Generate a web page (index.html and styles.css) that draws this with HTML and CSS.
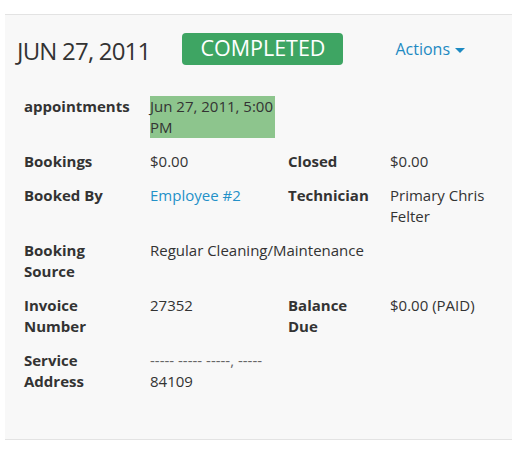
FILE: index.html
```html
<!DOCTYPE html>
<html>
<head>
    <title>Appointment</title>
    <link rel="stylesheet" href="styles.css">
</head>
<body>
    <div class="panel">
        <div class="panel-header">
            <h2 class="appt-date">JUN 27, 2011</h2>
            <span class="status-badge">COMPLETED</span>
            <a class="actions" href="#">Actions <span class="caret"></span></a>
        </div>
        <div class="details">
            <div class="label">appointments</div>
            <div class="value highlight">Jun 27, 2011, 5:00 PM</div>
            <div></div>
            <div></div>

            <div class="label">Bookings</div>
            <div class="value">$0.00</div>
            <div class="label">Closed</div>
            <div class="value">$0.00</div>

            <div class="label">Booked By</div>
            <div class="value"><a href="#">Employee #2</a></div>
            <div class="label">Technician</div>
            <div class="value">Primary Chris Felter</div>

            <div class="label">Booking Source</div>
            <div class="value wide">Regular Cleaning/Maintenance</div>

            <div class="label">Invoice Number</div>
            <div class="value">27352</div>
            <div class="label">Balance Due</div>
            <div class="value">$0.00 (PAID)</div>

            <div class="label">Service Address</div>
            <div class="value"><span class="muted">----- ----- -----, -----</span> 84109</div>
        </div>
    </div>
</body>
</html>
```

FILE: styles.css
```css
* { box-sizing: border-box; margin: 0; padding: 0; }
body {
    font-family: 'Open Sans', Arial, sans-serif;
    background: #fff;
    color: #333;
}
.panel {
    width: 507px;
    margin: 14px 0 0 5px;
    background: #f8f8f8;
    border-top: 1px solid #e3e3e3;
    border-bottom: 1px solid #e3e3e3;
    padding: 18px 19px 47px 19px;
}
.panel-header {
    display: flex;
    align-items: flex-start;
    margin-left: -7px;
}
.appt-date {
    font-size: 24px;
    font-weight: 400;
    line-height: 32px;
    letter-spacing: -0.8px;
    margin-top: 2px;
    color: #333;
}
.status-badge {
    margin-left: 32px;
    width: 161px;
    height: 32px;
    line-height: 29px;
    padding-bottom: 3px;
    text-align: center;
    background: #3ea563;
    color: #fff;
    font-size: 21.5px;
    border-radius: 4px;
}
.actions {
    margin-left: 52px;
    font-size: 16px;
    line-height: 32px;
    color: #1d8ac2;
    text-decoration: none;
}
.caret {
    display: inline-block;
    width: 0;
    height: 0;
    border-left: 5px solid transparent;
    border-right: 5px solid transparent;
    border-top: 5px solid #1d8ac2;
    vertical-align: middle;
    margin-left: 1px;
}
.details {
    display: grid;
    grid-template-columns: 113px 125px 89px 1fr;
    column-gap: 13px;
    row-gap: 13px;
    margin-top: 29px;
    font-size: 15px;
    line-height: 21px;
}
.label {
    font-weight: 700;
}
.value a {
    color: #2491c8;
    text-decoration: none;
}
.highlight {
    background: #8dc58d;
}
.wide {
    grid-column: span 3;
}
.muted {
    color: #666;
}
```
